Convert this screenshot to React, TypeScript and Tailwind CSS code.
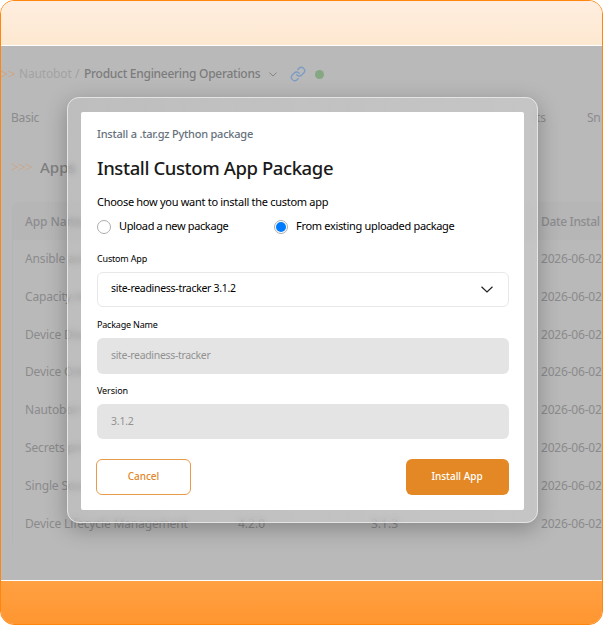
import React from 'react';

interface AppRow {
  name: string;
  version?: string;
  requires?: string;
  installed: string;
}

const rows: AppRow[] = [
  { name: 'Ansible auto', installed: '2026-06-02' },
  { name: 'Capacity metr', installed: '2026-06-02' },
  { name: 'Device Discov', installed: '2026-06-02' },
  { name: 'Device Onboa', installed: '2026-06-02' },
  { name: 'Nautobot UI', installed: '2026-06-02' },
  { name: 'Secrets provid', installed: '2026-06-02' },
  { name: 'Single Source', installed: '2026-06-02' },
  { name: 'Device Lifecycle Management', version: '4.2.0', requires: '3.1.3', installed: '2026-06-02' },
];

const Background: React.FC = () => (
  <div className="flex h-full flex-col overflow-hidden whitespace-nowrap bg-[#b9b9b9] text-[#8b8b8d]">
    <div className="mt-4 flex h-6 items-center text-[12px]">
      <svg className="h-2 w-[14px] shrink-0 text-[#d3a380]" viewBox="0 0 14 8" fill="none" stroke="currentColor" strokeWidth="0.9">
        <path d="M0 1l6 3L0 7M7.5 1l6 3-6 3" />
      </svg>
      <span className="ml-1 w-[53px] shrink-0 tracking-[-0.15px] text-[#a3a3a4]">Nautobot</span>
      <span className="ml-[3px] w-[9px] shrink-0 text-[#a0a0a0]">/</span>
      <span className="w-[178px] shrink-0 font-medium tracking-[-0.28px] text-[#7c7c7c]">Product Engineering Operations</span>
      <svg className="ml-[7px] h-[5px] w-2 shrink-0 text-[#828282]" viewBox="0 0 8 5" fill="none" stroke="currentColor">
        <path d="M.5 .7L4 4.1 7.5 .7" />
      </svg>
      <svg className="ml-[13px] h-4 w-4 shrink-0 text-[#7b9cc4]" viewBox="0 0 24 24" fill="none" stroke="currentColor" strokeWidth="2" strokeLinecap="round">
        <path d="M10 13a5 5 0 0 0 7.54.54l3-3a5 5 0 0 0-7.07-7.07l-1.72 1.71" />
        <path d="M14 11a5 5 0 0 0-7.54-.54l-3 3a5 5 0 0 0 7.07 7.07l1.71-1.71" />
      </svg>
      <span className="ml-[9px] h-[9px] w-[9px] shrink-0 rounded-full bg-[#85a883]" />
    </div>

    <div className="mt-[17px] flex h-[30px] items-center text-[12px]">
      <span className="ml-[10px] w-[525px] shrink-0 tracking-[-0.2px]">Basic</span>
      <span className="w-[51px] shrink-0">ts</span>
      <span className="shrink-0 tracking-[-0.3px]">Sn</span>
    </div>

    <div className="mt-[19px] flex h-[30px] items-center">
      <svg className="ml-[10px] h-2 w-[21px] shrink-0 text-[#cda383]" viewBox="0 0 21 8" fill="none" stroke="currentColor" strokeWidth="0.8">
        <path d="M.5 1l6 3-6 3M7.5 1l6 3-6 3M14.5 1l6 3-6 3" />
      </svg>
      <span className="ml-2 text-[15px] font-medium text-[#7f7f7f]">Apps</span>
    </div>

    <div className="ml-[11px] mt-5 rounded-tl-lg border-l border-t border-[#b5b5b5] text-[12px]">
      <div className="flex h-[37px] items-center rounded-tl-lg bg-[#b6b6b6] pl-3 font-medium text-[#8c8c8f]">
        <span className="w-[516px] shrink-0 tracking-[-0.1px]">App Name</span>
        <span className="shrink-0 tracking-[-0.35px]">Date Instal</span>
      </div>
      {rows.map((row) => (
        <div key={row.name} className="flex h-[37.85px] items-center pl-3">
          <span className="w-[213px] shrink-0 tracking-[-0.15px]">{row.name}</span>
          <span className="w-[133px] shrink-0">{row.version}</span>
          <span className="w-[170px] shrink-0">{row.requires}</span>
          <span className="tracking-[-0.2px]">{row.installed}</span>
        </div>
      ))}
    </div>
  </div>
);

const InstallModal: React.FC = () => (
  <div className="absolute left-[66px] top-[96px] h-[426px] w-[471px] rounded-xl border border-[#e4e4e4] bg-linear-to-r from-white/8 to-white/18 pl-[13px] pt-[14px] shadow-[0_6px_22px_rgba(0,0,0,0.28)] backdrop-blur-[3px]">
    <div className="flex h-[397.5px] w-[443px] flex-col rounded-[2px] bg-white pl-4 pr-[15px] text-black">
      <p className="mt-3 h-5 text-[11px] font-medium leading-5 tracking-[-0.22px] text-[#66717c]">Install a .tar.gz Python package</p>
      <h1 className="mt-2.5 h-7 text-[18.5px] font-medium leading-7 tracking-[-0.4px] text-[#1a1a1a]">Install Custom App Package</h1>

      <p className="mt-2.5 h-5 text-[11px] leading-5 tracking-[-0.29px]">Choose how you want to install the custom app</p>
      <div className="mt-[5px] flex h-5 items-center text-[11px]">
        <label className="flex w-[177px] items-center">
          <span className="h-[14px] w-[14px] rounded-full border border-[#adadad]" />
          <span className="-mt-0.5 ml-2 tracking-[-0.36px]">Upload a new package</span>
        </label>
        <label className="flex items-center">
          <span className="flex h-[14px] w-[14px] items-center justify-center rounded-full border border-[#adadad]">
            <span className="h-[10px] w-[10px] rounded-full bg-[#007bff]" />
          </span>
          <span className="-mt-0.5 ml-2 tracking-[-0.32px]">From existing uploaded package</span>
        </label>
      </div>

      <span className="mt-[14px] h-4 text-[9px] leading-4 tracking-[-0.18px]">Custom App</span>
      <div className="mt-[4.5px] flex h-[35.5px] w-[411.5px] items-center justify-between rounded-md border border-[#e8e8e8] pl-[13px] pr-[15px] text-[10.5px]">
        <span className="tracking-[-0.29px]">site-readiness-tracker 3.1.2</span>
        <svg className="h-[7px] w-3" viewBox="0 0 12 7" fill="none" stroke="#222" strokeWidth="1.2">
          <path d="M.5 .7L6 6 11.5 .7" />
        </svg>
      </div>

      <span className="mt-[10px] h-4 text-[9px] leading-4 tracking-[-0.2px]">Package Name</span>
      <div className="mt-[5px] flex h-[35.5px] w-[411.5px] items-center rounded-md bg-[#e4e4e4] pl-[14px] text-[10.5px] tracking-[-0.32px] text-[#929292]">site-readiness-tracker</div>

      <span className="mt-[9.5px] h-4 text-[9px] leading-4 tracking-[-0.1px]">Version</span>
      <div className="mt-[5px] flex h-[35px] w-[411.5px] items-center rounded-md bg-[#e4e4e4] pl-[14px] text-[10.5px] tracking-[-0.2px] text-[#929292]">3.1.2</div>

      <div className="mt-5 flex w-[411.5px] justify-between text-[10px]">
        <button className="-ml-px h-9 w-[95px] rounded-md border border-[#e99b4c] pb-0.5 font-medium tracking-[-0.05px] text-[#df882b]">Cancel</button>
        <button className="h-9 w-[103px] rounded-md bg-[#e38825] pb-0.5 font-medium text-white">Install App</button>
      </div>
    </div>
  </div>
);

const App: React.FC = () => {
  return (
    <div className="relative flex h-[625px] w-[603px] flex-col overflow-hidden rounded-[14px] border border-[#ff870f] font-['Noto_Sans',sans-serif]">
      <header className="h-[45px] shrink-0 border-b border-white bg-linear-to-b from-[#ffeee0] to-[#fde8d0]" />
      <main className="h-[534px] shrink-0">
        <Background />
      </main>
      <footer className="flex-1 border-t border-white bg-linear-to-b from-[#ffa042] to-[#ff9630]" />
      <InstallModal />
    </div>
  );
};

export default App;
